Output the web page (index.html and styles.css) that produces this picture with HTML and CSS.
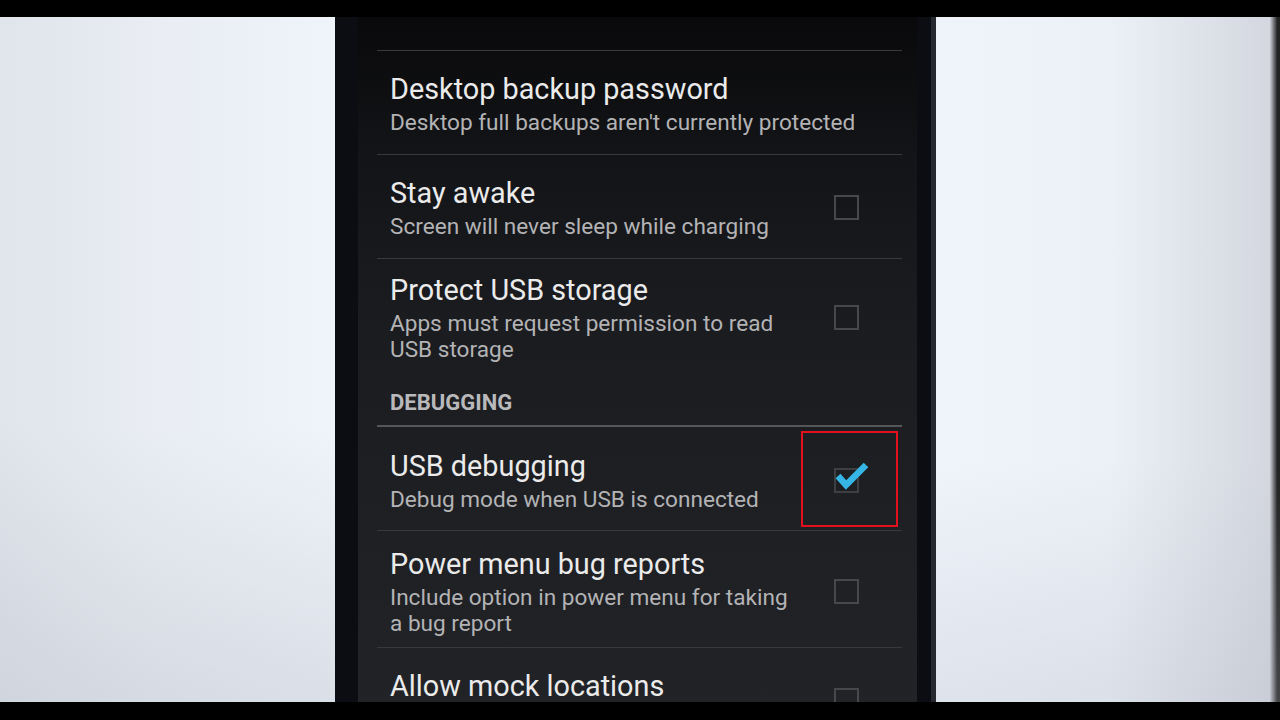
FILE: index.html
```html
<!DOCTYPE html>
<html>

<head>
    <meta charset="UTF-8">
    <title>Developer options</title>
    <link rel="stylesheet" href="styles.css">
</head>

<body>
    <div class="letterbox top"></div>

    <main class="stage">
        <div class="side left"></div>

        <div class="phone">
            <div class="screen">
                <div class="prefs">
                    <div class="pref-cut"></div>

                    <div class="pref">
                        <div class="pref-text">
                            <div class="pref-title">Desktop backup password</div>
                            <div class="pref-summary">Desktop full backups aren't currently protected</div>
                        </div>
                    </div>

                    <div class="pref">
                        <div class="pref-text">
                            <div class="pref-title">Stay awake</div>
                            <div class="pref-summary">Screen will never sleep while charging</div>
                        </div>
                        <div class="pref-widget"><span class="checkbox"></span></div>
                    </div>

                    <div class="pref tall last">
                        <div class="pref-text">
                            <div class="pref-title">Protect USB storage</div>
                            <div class="pref-summary">Apps must request permission to read<br>USB storage</div>
                        </div>
                        <div class="pref-widget"><span class="checkbox"></span></div>
                    </div>

                    <div class="pref-category">DEBUGGING</div>

                    <div class="pref highlighted">
                        <div class="pref-text">
                            <div class="pref-title">USB debugging</div>
                            <div class="pref-summary">Debug mode when USB is connected</div>
                        </div>
                        <div class="pref-widget">
                            <span class="checkbox checked">
                                <svg class="check" width="40" height="32" viewBox="0 0 40 32">
                                    <polyline points="4,16 12,25 32,5" fill="none" stroke="#36b6e6" stroke-width="6.5" />
                                </svg>
                            </span>
                        </div>
                        <div class="highlight"></div>
                    </div>

                    <div class="pref tall">
                        <div class="pref-text">
                            <div class="pref-title">Power menu bug reports</div>
                            <div class="pref-summary">Include option in power menu for taking<br>a bug report</div>
                        </div>
                        <div class="pref-widget"><span class="checkbox"></span></div>
                    </div>

                    <div class="pref cut-off">
                        <div class="pref-text">
                            <div class="pref-title">Allow mock locations</div>
                        </div>
                        <div class="pref-widget"><span class="checkbox"></span></div>
                    </div>
                </div>
            </div>
        </div>

        <div class="side right"></div>
    </main>

    <div class="letterbox bottom"></div>
</body>

</html>
```

FILE: styles.css
```css
body {
    margin: 0;
    width: 1280px;
    height: 720px;
    overflow: hidden;
    background: #000;
    font-family: Roboto, "Noto Sans", sans-serif;
}

.letterbox {
    background: #000;
}

.letterbox.top {
    height: 17px;
}

.letterbox.bottom {
    height: 18px;
}

.stage {
    display: flex;
    height: 685px;
    overflow: hidden;
}

.side.left {
    width: 335px;
    background:
        linear-gradient(to top, rgba(170, 176, 190, 0.3), rgba(170, 176, 190, 0) 40%),
        linear-gradient(to right, #e0e4eb, #e9edf3 45%, #eff4fa);
}

.side.right {
    flex: 1;
    background:
        linear-gradient(to top, rgba(170, 176, 190, 0.25), rgba(170, 176, 190, 0) 35%),
        linear-gradient(to right, #eff4fb, #ecf0f7 50%, #d4d7df 97%, #222 99.2%);
}

.phone {
    width: 559px;
    padding: 0 14px 0 23px;
    border-right: 5px solid #25282e;
    background: #0b0d12;
}

.screen {
    height: 100%;
    overflow: hidden;
    background: linear-gradient(to bottom, #09090b, #131417 20%, #1b1c20 45%, #212327 100%);
}

.prefs {
    margin: 0 15px 0 19px;
}

.pref-cut {
    height: 33px;
    border-bottom: 1px solid #38393c;
}

.pref {
    position: relative;
    display: flex;
    align-items: center;
    padding: 20px 26px 18px 13px;
    border-bottom: 1px solid #38393c;
}

.pref.highlighted {
    padding-top: 21px;
    padding-bottom: 17px;
}

.pref.tall {
    padding-top: 15px;
    padding-bottom: 10px;
}

.pref.tall.last {
    padding-top: 13px;
    border-bottom: none;
}

.pref.cut-off {
    align-items: flex-start;
    padding-bottom: 0;
    border-bottom: none;
}

.pref.cut-off .checkbox {
    margin-top: 20px;
}

.pref-text {
    flex: 1;
}

.pref-title {
    font-size: 28.8px;
    line-height: 36px;
    color: #ebebeb;
}

.pref-summary {
    margin-top: 3px;
    font-size: 22.6px;
    line-height: 26px;
    color: #b3b3b5;
}

.pref-widget {
    width: 60px;
    display: flex;
    justify-content: center;
}

.checkbox {
    position: relative;
    width: 21px;
    height: 21px;
    border: 2px solid #46484c;
}

.checkbox.checked {
    border-color: #3d3f43;
}

.check {
    position: absolute;
    left: -2px;
    top: -10px;
}

.pref-category {
    padding: 18px 13px 10px;
    font-size: 22px;
    line-height: 24px;
    font-weight: bold;
    color: #b9b9bb;
    border-bottom: 2px solid #545659;
}

.highlight {
    position: absolute;
    top: 4px;
    right: 4px;
    width: 93px;
    height: 92px;
    border: 2px solid #e3111d;
}
```
